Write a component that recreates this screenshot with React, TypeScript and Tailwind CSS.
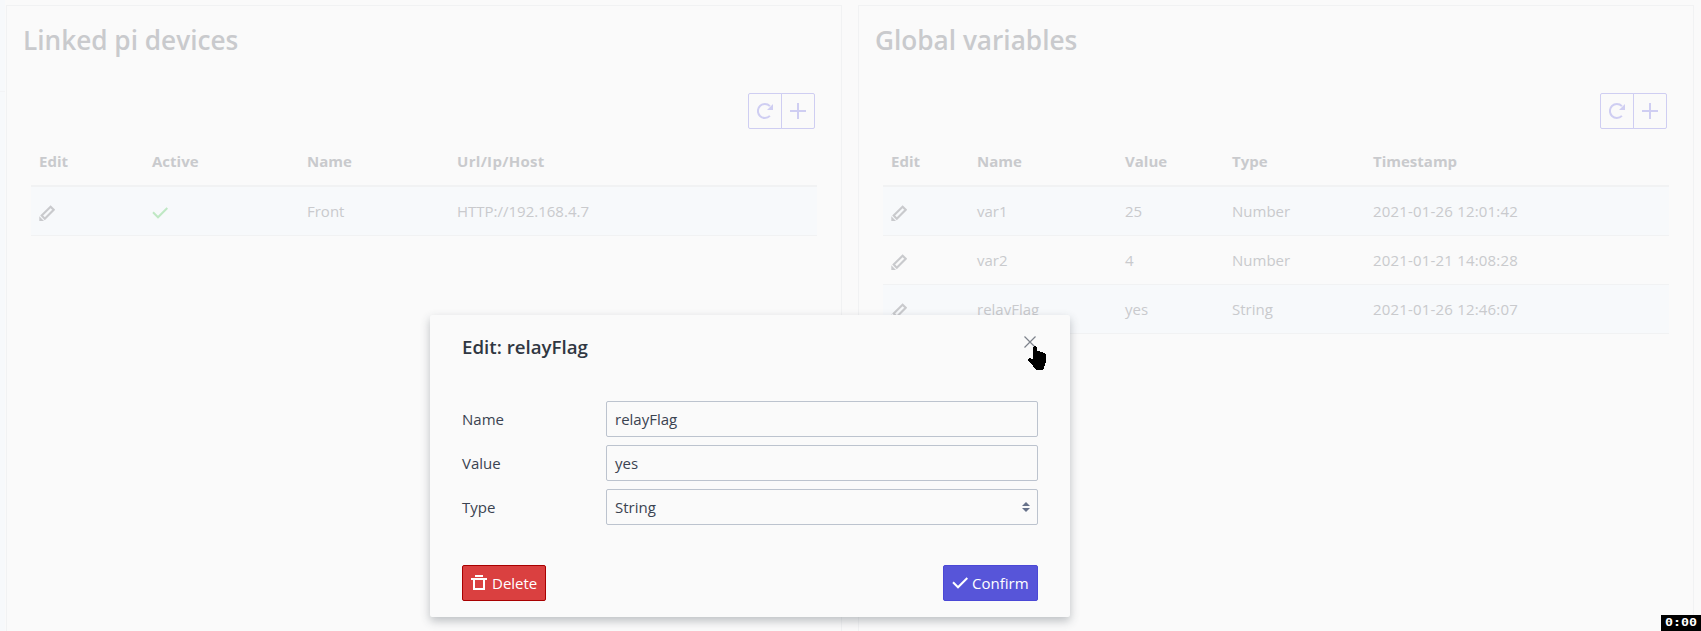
import React from "react";

const Pencil = () => (
  <svg className="mt-[3px] block h-4 w-4" viewBox="0 0 16 16" fill="none" stroke="#c9cacd">
    <path d="M2.7 10.6 L11.6 1.7 L14.7 4.8 L5.8 13.7 Z" strokeWidth="2.1" />
    <path d="M0.3 11.2 V16 H5 Z" fill="#c9cacd" stroke="none" />
  </svg>
);

const Check = ({ className }: { className: string }) => (
  <svg className={className} viewBox="0 0 16 16" fill="none" stroke="currentColor" strokeWidth="2">
    <path d="M1 7.3 L6 12.3 L15.3 3" />
  </svg>
);

const Refresh = () => (
  <svg className="block h-4 w-4" viewBox="0 0 16 16">
    <path d="M12.9 12.9 A7 7 0 1 1 12.9 3.1" fill="none" stroke="#cfcef2" strokeWidth="2" />
    <path d="M16 1 V7 H10 Z" fill="#cfcef2" />
  </svg>
);

const Plus = () => (
  <svg className="block h-4 w-4" viewBox="0 0 16 16">
    <path d="M7 0 H9 V7 H16 V9 H9 V16 H7 V9 H0 V7 H7 Z" fill="#cfcef2" />
  </svg>
);

const Trash = () => (
  <svg className="block h-4 w-4" viewBox="0 0 16 16" fill="none" stroke="white" strokeWidth="2">
    <path d="M0 4 H16 M4 1 H12 M3 4 V14 H13 V4" />
  </svg>
);

function Panel({ title, children }: { title: string; children: React.ReactNode }) {
  return (
    <section className="h-[640px] w-[836px] shrink-0 border border-[#f1f2f3]">
      <h3 className="mt-[15px] ml-4 h-[72px] text-[26.2px] leading-[38px] font-semibold text-[#c9cacd]">{title}</h3>
      <div className="mr-[26px] flex justify-end">
        <button className="flex h-9 w-[34px] items-center justify-center rounded-l-xs border border-[#cfcef2]"><Refresh /></button>
        <button className="-ml-px flex h-9 w-[34px] items-center justify-center rounded-r-xs border border-[#cfcef2]"><Plus /></button>
      </div>
      <div className="mt-2 ml-6 w-[786px] text-[15px] leading-6 text-[#c9cacd]">{children}</div>
    </section>
  );
}

const leftCols = "grid h-[49px] grid-cols-[113px_155px_150px_1fr] items-center border-b border-[#f1f2f3] pl-2";
const rightCols = "grid h-[49px] grid-cols-[86px_148px_107px_141px_1fr] items-center border-b border-[#f1f2f3] pl-2";

const variables = [
  ["var1", "25", "Number", "2021-01-26 12:01:42"],
  ["var2", "4", "Number", "2021-01-21 14:08:28"],
  ["relayFlag", "yes", "String", "2021-01-26 12:46:07"],
];

export default function App() {
  return (
    <div className="relative h-[631px] w-[1701px] overflow-hidden bg-[#fafafa] font-['Open_Sans','Noto_Sans',sans-serif]">
      <div className="flex">
        <aside className="h-[631px] w-[5px] shrink-0 bg-[#f7f9fb]">
          <div className="h-[92px] border-b border-[#f3f4f6]" />
        </aside>
        <main className="ml-px flex gap-4 pt-[5px]">
          <Panel title="Linked pi devices">
            <div className={`${leftCols} !h-[50px] border-b-2 font-bold`}>
              <span>Edit</span><span>Active</span><span>Name</span><span className="tracking-[0.3px]">Url/Ip/Host</span>
            </div>
            <div className={`${leftCols} bg-[#f7f9fb]`}>
              <Pencil /><Check className="mt-[3px] block h-4 w-4 text-[#bfe8c4]" /><span>Front</span><span>HTTP://192.168.4.7</span>
            </div>
          </Panel>
          <Panel title="Global variables">
            <div className={`${rightCols} !h-[50px] border-b-2 font-bold`}>
              <span>Edit</span><span>Name</span><span>Value</span><span>Type</span><span>Timestamp</span>
            </div>
            {variables.map((row) => (
              <div key={row[0]} className={`${rightCols} odd:bg-[#fafafa] even:bg-[#f7f9fb]`}>
                <Pencil />
                {row.map((cell) => <span key={cell} className="last:tracking-[0.18px]">{cell}</span>)}
              </div>
            ))}
          </Panel>
        </main>
      </div>

      <div className="absolute top-[315px] left-[430px] flex h-[302px] w-[640px] flex-col rounded-xs bg-[#fafafa] px-8 text-[15px] text-[#3b4351] shadow-[0_4px_10px_rgba(48,55,66,0.3)]">
        <div className="flex justify-between">
          <h5 className="mt-[18px] text-[18.7px] leading-7 font-semibold text-[#303742]">Edit: relayFlag</h5>
          <svg className="mt-[21px] mr-0.5 h-3 w-3" viewBox="0 0 12 12" stroke="#7d828b" strokeWidth="1.2">
            <path d="M0.5 0.5 L11.5 11.5 M11.5 0.5 L0.5 11.5" />
          </svg>
        </div>
        <div className="mt-10 grid grid-cols-[144px_432px] items-center gap-y-2">
          <label>Name</label>
          <div className="flex h-9 items-center rounded-xs border border-[#bcc3ce] px-2">relayFlag</div>
          <label>Value</label>
          <div className="flex h-9 items-center rounded-xs border border-[#bcc3ce] px-2">yes</div>
          <label>Type</label>
          <div className="flex h-9 items-center justify-between rounded-xs border border-[#bcc3ce] pr-[7px] pl-2">
            String
            <svg className="h-[10px] w-2" viewBox="0 0 8 10" fill="#667189"><path d="M4 0 L8 4 H0 Z M0 6 H8 L4 10 Z" /></svg>
          </div>
        </div>
        <div className="mt-10 flex justify-between text-white">
          <button className="flex h-9 w-[84px] items-center gap-[5px] rounded-xs border border-[#a80000] bg-[#da4040] pl-2"><Trash />Delete</button>
          <button className="flex h-9 w-[95px] items-center gap-1 rounded-xs border border-[#4b48d6] bg-[#5755d9] pl-2"><Check className="block h-4 w-4" />Confirm</button>
        </div>
      </div>

      <svg className="absolute top-[346px] left-[1028px] h-6 w-[18px]" viewBox="0 0 18 24" shapeRendering="crispEdges">
        <path d="M5 1 H6 V0 H8 V1 H9 V5 H12 V6 H15 V7 H17 V8 H18 V17 H17 V20 H16 V23 H15 V24 H8 V23 H7 V22 H6 V21 H5 V19 H4 V18 H3 V17 H2 V16 H1 V15 H0 V13 H1 V12 H3 V13 H5 Z" />
      </svg>
      <div className="absolute right-0 bottom-0 flex h-4 w-10 items-center justify-center bg-black font-['DejaVu_Sans_Mono',monospace] text-[10px] leading-4 font-bold text-white">
        <span className="scale-x-[1.33]">0:00</span>
      </div>
    </div>
  );
}
